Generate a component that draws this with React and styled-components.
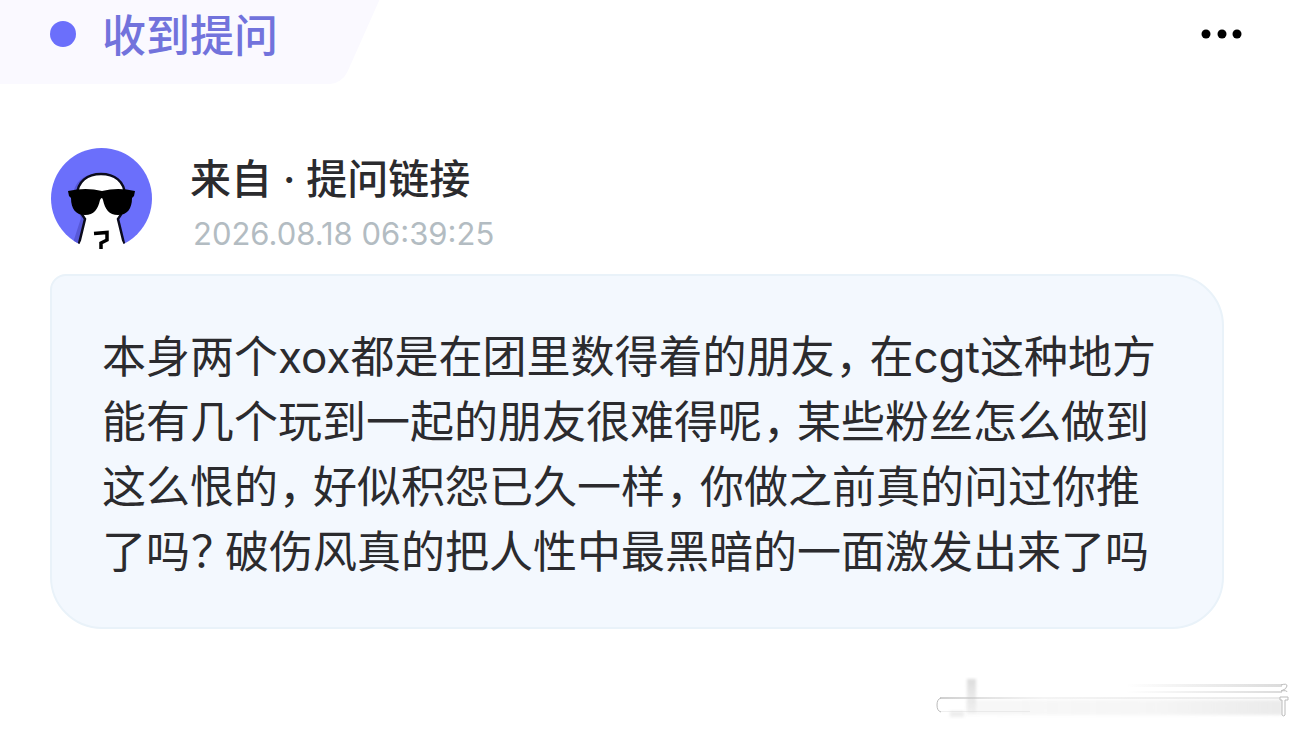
import React from "react";
import styled, { createGlobalStyle } from "styled-components";

const GlobalStyle = createGlobalStyle`
  * { box-sizing: border-box; }
  body {
    margin: 0;
    background: #fff;
    color: #2b2b2e;
    font-family: Inter, "Noto Sans CJK SC", sans-serif;
  }
`;

const Page = styled.main`
  display: flex;
  flex-direction: column;
  min-height: 100vh;
`;

const Header = styled.header`
  display: flex;
  align-items: flex-start;
  justify-content: space-between;
  padding-right: 51px;
`;

const Tab = styled.div`
  position: relative;
  isolation: isolate;
  display: flex;
  align-items: center;
  gap: 26px;
  height: 84px;
  padding: 0 102px 16px 50px;
  overflow: hidden;

  &::before {
    content: "";
    position: absolute;
    z-index: -1;
    inset: 0 38px 0 -60px;
    background: #faf9ff;
    border-bottom-right-radius: 12px;
    transform: skewX(-24deg);
    transform-origin: bottom;
  }
`;

const Dot = styled.span`
  width: 26px;
  height: 26px;
  border-radius: 50%;
  background: #6b6ffb;
`;

const Title = styled.h1`
  margin: 0;
  padding-top: 4px;
  font-size: 44px;
  line-height: 64px;
  font-weight: 500;
  color: #7273dc;
`;

const MoreButton = styled.button`
  display: flex;
  margin-top: 22px;
  padding: 4px;
  border: 0;
  background: none;
`;

const Sender = styled.section`
  display: flex;
  align-items: flex-start;
  gap: 38px;
  padding: 64px 51px 0;
`;

const SenderText = styled.div`
  display: flex;
  flex-direction: column;
`;

const Name = styled.h2`
  margin: 0;
  font-size: 41px;
  line-height: 62px;
  font-weight: 500;
`;

const Time = styled.time`
  padding-left: 3px;
  font-size: 31px;
  line-height: 48px;
  color: #b3bcc2;
`;

const Bubble = styled.article`
  margin: 16px 76px 0 50px;
  padding: 49px 50px 42px;
  border: 2px solid #e9f2f9;
  border-radius: 16px 52px 52px 52px;
  background: #f3f8fe;
`;

const Message = styled.p`
  margin: 0;
  font-size: 44px;
  line-height: 65px;
`;

const Punct = styled.span`
  padding: 0 12px 0 1px;
  font-feature-settings: "halt";
`;

const Watermark = styled.footer`
  display: flex;
  justify-content: flex-end;
  margin-top: auto;
  padding: 0 10px 10px;
`;

function Avatar() {
  return (
    <svg width="101" height="101" viewBox="0 0 101 101" role="img" aria-label="头像">
      <defs>
        <clipPath id="disc"><circle cx="50.5" cy="50.5" r="50.5" /></clipPath>
      </defs>
      <g clipPath="url(#disc)">
        <rect width="101" height="101" fill="#6b6ffb" />
        <path d="M46 26C31 26 22 36 22 50L30 70L20 101H40Z" fill="#5758d8" />
        <path d="M34 71C30 66 26 58 26 48C26 33 37 26 50 26C63 26 74 33 74 48C74 58 71 66 67 71L75 104H26Z" fill="#fff" stroke="#0b0b1c" strokeWidth="2.5" />
      </g>
      <path d="M28 97L30 93H71L73 97L71 101H31Z" fill="#fff" />
      <path d="M17 43Q35 39 51 43Q67 39 84 43L83 48L81 50C81 61 76 67 67 67C58 67 54 61 52 52Q51 48 49 52C47 61 43 67 34 67C25 67 20 61 20 50L18 48Z" fill="#000" />
      <path d="M43 85.5L56 84.5V92L50 95V101" fill="none" stroke="#000" strokeWidth="3.5" />
    </svg>
  );
}

function Smudge() {
  return (
    <svg width="354" height="44" viewBox="0 0 354 44" aria-hidden="true">
      <defs>
        <linearGradient id="wash">
          <stop offset="0" stopColor="#ccc" stopOpacity=".15" />
          <stop offset=".6" stopColor="#ccc" stopOpacity=".18" />
          <stop offset="1" stopColor="#ccc" stopOpacity=".4" />
        </linearGradient>
        <linearGradient id="streak">
          <stop offset="0" stopColor="#ccc" stopOpacity="0" />
          <stop offset="1" stopColor="#ccc" stopOpacity=".7" />
        </linearGradient>
        <linearGradient id="edge">
          <stop offset="0" stopColor="#bbb" stopOpacity=".7" />
          <stop offset=".3" stopColor="#ccc" stopOpacity=".2" />
          <stop offset="1" stopColor="#ccc" stopOpacity=".4" />
        </linearGradient>
        <linearGradient id="drop" x1="0" y1="0" x2="0" y2="1">
          <stop offset="0" stopColor="#ccc" stopOpacity=".7" />
          <stop offset="1" stopColor="#ccc" stopOpacity=".15" />
        </linearGradient>
        <filter id="soft" x="-50%" y="-20%" width="200%" height="140%"><feGaussianBlur stdDeviation="1.5" /></filter>
      </defs>
      <rect x="30" y="23" width="316" height="15" fill="url(#wash)" filter="url(#soft)" />
      <rect x="31" y="2" width="9" height="34" fill="url(#drop)" filter="url(#soft)" />
      <rect x="14" y="34" width="14" height="6" fill="#ddd" opacity=".5" filter="url(#soft)" />
      <rect x="4" y="20" width="342" height="2" fill="url(#edge)" />
      <rect x="4" y="34" width="90" height="1" fill="#ccc" opacity=".3" />
      <path d="M5 21Q1 22 1 28Q1 34 5 35" fill="none" stroke="#bbb" />
      <rect x="190" y="7" width="156" height="3" fill="url(#streak)" />
      <rect x="190" y="14" width="156" height="2" fill="url(#streak)" />
      <path d="M345 8Q351 6 351 9Q351 12 345 14Q351 13 351 15" fill="none" stroke="#bbb" />
      <path d="M344 20H352V23H349V38Q348 40 346 38V23H344Z" fill="#fff" stroke="#bbb" />
    </svg>
  );
}

export default function App() {
  return (
    <>
      <GlobalStyle />
      <Page>
        <Header>
          <Tab>
            <Dot />
            <Title>收到提问</Title>
          </Tab>
          <MoreButton type="button" aria-label="更多">
            <svg width="46" height="16" viewBox="0 0 46 16">
              <circle cx="7" cy="8" r="4.5" /><circle cx="23" cy="8" r="4.5" /><circle cx="38" cy="8" r="4.5" />
            </svg>
          </MoreButton>
        </Header>
        <Sender>
          <Avatar />
          <SenderText>
            <Name>来自 · 提问链接</Name>
            <Time dateTime="2026-08-18T06:39:25">2026.08.18 06:39:25</Time>
          </SenderText>
        </Sender>
        <Bubble>
          <Message>
            本身两个xox都是在团里数得着的朋友<Punct>，</Punct>在cgt这种地方能有几个玩到一起的朋友很难得呢<Punct>，</Punct>某些粉丝怎么做到这么恨的<Punct>，</Punct>好似积怨已久一样<Punct>，</Punct>你做之前真的问过你推了吗<Punct>？</Punct>破伤风真的把人性中最黑暗的一面激发出来了吗
          </Message>
        </Bubble>
        <Watermark><Smudge /></Watermark>
      </Page>
    </>
  );
}
